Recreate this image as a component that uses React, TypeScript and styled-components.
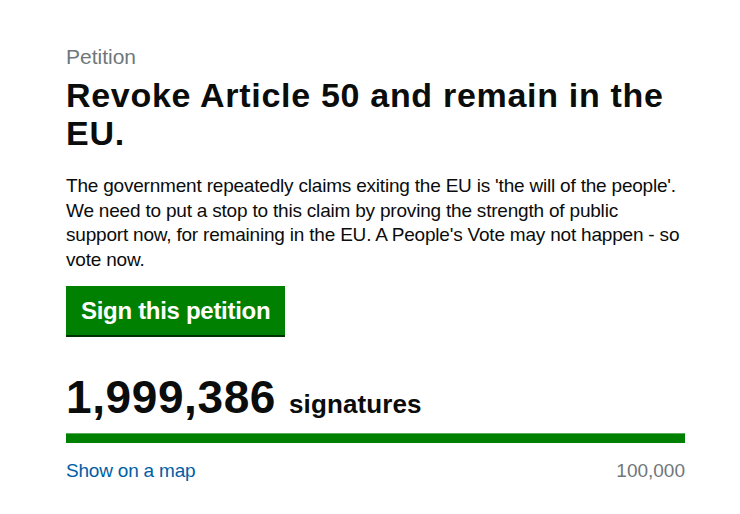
import React from "react";
import styled, { createGlobalStyle } from "styled-components";

const GlobalStyle = createGlobalStyle`
  html, body {
    margin: 0;
    padding: 0;
    background: #ffffff;
  }
  body {
    font-family: "Liberation Sans", Arial, sans-serif;
    color: #0b0c0c;
  }
`;

const Page = styled.main`
  width: 619px;
  padding: 44px 0 0 66px;
`;

const Kicker = styled.span`
  display: block;
  font-size: 21px;
  line-height: 26px;
  color: #6f777b;
`;

const Title = styled.h1`
  margin: 6px 0 22px;
  font-size: 34px;
  line-height: 38px;
  letter-spacing: 0.7px;
  font-weight: 700;
`;

// the source font runs a little narrower than Liberation Sans, so the
// line after "public" is broken by hand to keep the original wrapping
const Summary = styled.p`
  margin: 0 -6px 14px 0;
  font-size: 19px;
  line-height: 24.5px;
  letter-spacing: -0.2px;
`;

const SignButton = styled.button`
  display: block;
  margin: 0 0 37px;
  padding: 9px 15px 8px;
  border: none;
  border-radius: 0;
  background: #008000;
  box-shadow: 0 2px 0 #003300;
  color: #ffffff;
  font-family: inherit;
  font-size: 24px;
  line-height: 32px;
  letter-spacing: -0.3px;
  font-weight: 700;
  cursor: pointer;
`;

const Count = styled.div`
  display: flex;
  align-items: baseline;
  gap: 13px;
  margin: 0 0 11px;
  font-weight: 700;
`;

const CountNumber = styled.span`
  font-size: 46px;
  line-height: 50px;
  letter-spacing: 0.6px;
`;

const CountLabel = styled.span`
  font-size: 26px;
  line-height: 28px;
  letter-spacing: 0.1px;
`;

const Track = styled.div`
  height: 10px;
  background: #dee0e2;
`;

const Fill = styled.div`
  height: 100%;
  background: #008000;
  box-shadow: inset 0 1px 0 rgba(255, 255, 255, 0.35);
`;

const Meta = styled.div`
  display: flex;
  justify-content: space-between;
  margin-top: 16px;
  font-size: 19px;
  line-height: 24px;
`;

const MapLink = styled.a`
  color: #005ea5;
  text-decoration: none;
  letter-spacing: -0.2px;
`;

const Target = styled.span`
  color: #6f777b;
`;

export default function App() {
  const signatures = 1999386;
  const target = 100000;
  const progress = Math.min(signatures / target, 1) * 100;

  return (
    <>
      <GlobalStyle />
      <Page>
        <Kicker>Petition</Kicker>
        <Title>Revoke Article 50 and remain in the EU.</Title>
        <Summary>
          The government repeatedly claims exiting the EU is 'the will of the
          people'. We need to put a stop to this claim by proving the strength
          of public
          <br />
          support now, for remaining in the EU. A People's Vote may not happen
          - so vote now.
        </Summary>
        <SignButton>Sign this petition</SignButton>
        <Count>
          <CountNumber>{signatures.toLocaleString("en-GB")}</CountNumber>
          <CountLabel>signatures</CountLabel>
        </Count>
        <Track>
          <Fill style={{ width: `${progress}%` }} />
        </Track>
        <Meta>
          <MapLink href="#">Show on a map</MapLink>
          <Target>{target.toLocaleString("en-GB")}</Target>
        </Meta>
      </Page>
    </>
  );
}
